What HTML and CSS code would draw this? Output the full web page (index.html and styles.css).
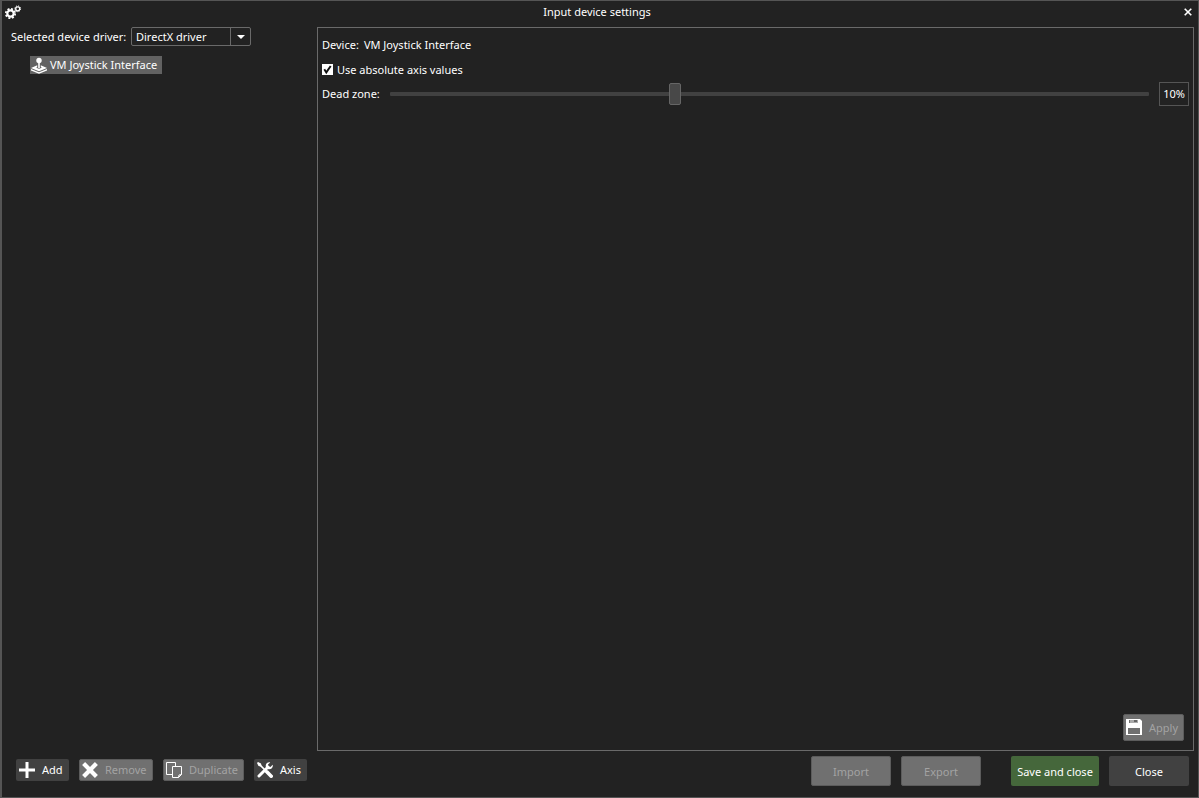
FILE: index.html
```html
<!DOCTYPE html>
<html lang="en">
<head>
    <meta charset="UTF-8">
    <meta name="viewport" content="width=device-width, initial-scale=1.0">
    <title>Input device settings</title>
    <link rel="stylesheet" href="styles.css">
</head>
<body>
    <div class="window">
        <div class="title-bar">
            <svg class="gears" width="17" height="16" viewBox="0 0 17 16">
                <circle cx="5.5" cy="9.5" r="3.2" fill="none" stroke="#fff" stroke-width="2.2"/>
                <circle cx="5.5" cy="9.5" r="4.7" fill="none" stroke="#fff" stroke-width="1.7" stroke-dasharray="2 1.69"/>
                <circle cx="12.700" cy="4.800" r="2" fill="none" stroke="#fff" stroke-width="1.300"/>
                <circle cx="12.700" cy="4.800" r="2.900" fill="none" stroke="#fff" stroke-width="1" stroke-dasharray="1.200 1.078"/>
            </svg>
            <h1>Input device settings</h1>
            <svg class="close-icon" width="8" height="8" viewBox="0 0 8 8">
                <path d="M.7.7l6.6 6.6M7.3.7L.7 7.3" stroke="#fff" stroke-width="1.6"/>
            </svg>
        </div>

        <div class="content">
            <div class="sidebar">
                <div class="driver-row">
                    <span>Selected device driver:</span>
                    <div class="select">
                        <span class="select-value">DirectX driver</span>
                        <span class="select-arrow"></span>
                    </div>
                </div>
                <div class="device-item">
                    <svg width="17" height="17" viewBox="0 0 17 17">
                        <circle cx="9" cy="3.500" r="2.700" fill="#fff"/>
                        <path d="M8.200 5h1.600v6H8.200z" fill="#fff"/>
                        <path d="M7.200 8.200L1 11l8 3.200 8-3.200-6.200-2.800v2l1.200.6-3 1-3-1 1.200-.6z" fill="#fff"/>
                        <path d="M1 12v1.600l8 3.200 8-3.200V12l-8 3.200z" fill="#fff"/>
                    </svg>
                    <span>VM Joystick Interface</span>
                </div>
                <div class="device-actions">
                    <button class="btn btn-small add">
                        <svg width="16" height="16" viewBox="0 0 16 16">
                            <path d="M8 0v16M0 8h16" stroke="#fff" stroke-width="3"/>
                        </svg>
                        <span>Add</span>
                    </button>
                    <button class="btn btn-small remove" disabled>
                        <svg width="16" height="16" viewBox="0 0 16 16">
                            <path d="M1.6 1.6l12.8 12.8M14.4 1.6L1.6 14.4" stroke="#fff" stroke-width="4.2"/>
                        </svg>
                        <span>Remove</span>
                    </button>
                    <button class="btn btn-small duplicate" disabled>
                        <svg width="16" height="16" viewBox="0 0 16 16">
                            <path d="M6 12.500H.5V.5h9V4M6.500 4.500h9v8l-3 3h-6zM12.500 15.500l.5-2.500 2.500-.5" fill="none" stroke="#fff"/>
                        </svg>
                        <span>Duplicate</span>
                    </button>
                    <button class="btn btn-small axis">
                        <svg width="16" height="16" viewBox="0 0 16 16">
                            <path d="M1.500 1.500L9 9" stroke="#fff" stroke-width="1.700"/>
                            <path d="M0 1L1 0l3 1.500.5 2L3.500 4.500l-2-.5z" fill="#fff"/>
                            <path d="M9.800 9.800l4.400 4.400" stroke="#fff" stroke-width="3.600" stroke-linecap="round"/>
                            <path d="M2 14L11 5" stroke="#fff" stroke-width="3" stroke-linecap="round"/>
                            <path d="M13.200.4L11 2.600l.4 2 2 .4 2.300-2.200c.7 2.400-1.200 5-4.400 4.400L8.800 4.700C8.200 1.900 10.500-.4 13.200.4z" fill="#fff"/>
                        </svg>
                        <span>Axis</span>
                    </button>
                </div>
            </div>

            <div class="main">
                <div class="panel">
                    <div class="device-name"><span>Device:</span><span>VM Joystick Interface</span></div>
                    <div class="checkbox-row">
                        <svg width="11" height="11" viewBox="0 0 11 11">
                            <path d="M0 0h11v11H0z" fill="#fff"/>
                            <path d="M2.300 5.200l2 3.200L8.700 2" fill="none" stroke="#111" stroke-width="1.900"/>
                        </svg>
                        <span>Use absolute axis values</span>
                    </div>
                    <div class="slider-row">
                        <span class="slider-label">Dead zone:</span>
                        <div class="slider"><div class="slider-handle"></div></div>
                        <div class="slider-value">10%</div>
                    </div>
                    <button class="btn apply" disabled>
                        <svg width="16" height="16" viewBox="0 0 16 16">
                            <path fill-rule="evenodd" d="M0 0h14l2 2v14H0zM3 1v3h9V1zM2 9v6h12V9z" fill="#fff"/>
                            <path d="M4 1h8v3H4z" fill="#aaa"/>
                            <path d="M8 1h3v2H8z" fill="#666"/>
                        </svg>
                        <span>Apply</span>
                    </button>
                </div>
                <div class="footer">
                    <button class="btn" disabled>Import</button>
                    <button class="btn" disabled>Export</button>
                    <button class="btn save">Save and close</button>
                    <button class="btn">Close</button>
                </div>
            </div>
        </div>
    </div>
</body>
</html>
```
FILE: styles.css
```css
* {
    box-sizing: border-box;
}

body {
    margin: 0;
    background: #222;
    color: #fff;
    font-family: "Noto Sans", sans-serif;
    font-size: 11px;
    line-height: 16px;
    white-space: nowrap;
}

svg {
    display: block;
    flex: none;
}

.window {
    display: flex;
    flex-direction: column;
    height: 798px;
    border: 1px solid #555;
    border-left-width: 2px;
}

.title-bar {
    display: flex;
    align-items: center;
    height: 26px;
    padding: 0 6px 4px 3px;
}

.title-bar h1 {
    flex: 1;
    margin: 0;
    padding-right: 12px;
    font-size: 11px;
    font-weight: normal;
    text-align: center;
}

.content {
    display: flex;
    flex: 1;
}

.sidebar {
    display: flex;
    flex-direction: column;
    width: 315px;
    padding: 0 0 16px 9px;
}

.driver-row {
    display: flex;
    align-items: center;
    justify-content: space-between;
    width: 240px;
    height: 19px;
}

.select {
    display: flex;
    width: 120px;
    height: 19px;
    border: 1px solid #6a6a6a;
    border-radius: 2px;
}

.select-value {
    flex: 1;
    padding-left: 4px;
    line-height: 18px;
}

.select-arrow {
    display: flex;
    align-items: center;
    justify-content: center;
    width: 20px;
    border-left: 1px solid #6a6a6a;
}

.select-arrow::after {
    content: "";
    border: 4px solid transparent;
    border-top-color: #fff;
    border-bottom: 0;
}

.device-item {
    display: flex;
    align-items: center;
    gap: 3px;
    width: 132px;
    height: 18px;
    margin: 10px 0 0 19px;
    background: #626262;
}

.device-actions {
    display: flex;
    gap: 10px;
    margin-top: auto;
    padding-left: 5px;
}

.btn {
    display: flex;
    align-items: center;
    justify-content: center;
    width: 80px;
    height: 30px;
    padding: 0;
    border: 0;
    border-radius: 2px;
    background: #414141;
    color: #fff;
    font: inherit;
}

.btn:disabled {
    border: 1px solid #5c5c5c;
    background: #707070;
    color: #a3a3a3;
}

.btn-small {
    justify-content: flex-start;
    gap: 7px;
    height: 22px;
    padding-left: 3px;
}

.btn-small:disabled {
    padding-left: 2px;
}

.add,
.axis {
    width: 53px;
}

.remove {
    width: 74px;
}

.duplicate {
    width: 81px;
}

.main {
    display: flex;
    flex: 1;
    flex-direction: column;
    padding-right: 4px;
}

.panel {
    display: flex;
    flex: 1;
    flex-direction: column;
    padding: 9px 4px 9px;
    border: 1px solid #6a6a6a;
}

.device-name {
    display: flex;
    gap: 5px;
}

.checkbox-row {
    display: flex;
    align-items: center;
    gap: 4px;
    margin-top: 9px;
}

.checkbox-row svg {
    margin-bottom: 1px;
}

.slider-row {
    display: flex;
    align-items: center;
    height: 24px;
    margin-top: 4px;
}

.slider-label {
    width: 68px;
}

.slider {
    display: flex;
    flex: 1;
    align-items: center;
    height: 4px;
    border-radius: 1px;
    background: #414141;
}

.slider-handle {
    width: 12px;
    height: 22px;
    margin-left: 279px;
    border: 1px solid #666;
    border-radius: 2px;
    background: #484848;
}

.slider-value {
    width: 30px;
    height: 24px;
    margin-left: 10px;
    border: 1px solid #555;
    line-height: 22px;
    text-align: center;
}

.apply {
    justify-content: flex-start;
    gap: 7px;
    width: 61px;
    height: 27px;
    margin: auto 5px 0 auto;
    padding-left: 2px;
}

.apply svg {
    margin-bottom: 2px;
}

.footer {
    display: flex;
    justify-content: flex-end;
    gap: 10px;
    padding: 5px 5px 11px 0;
}

.footer .btn {
    padding-top: 2px;
}

.save {
    width: 88px;
    margin-left: 20px;
    background: #45673b;
}
```
